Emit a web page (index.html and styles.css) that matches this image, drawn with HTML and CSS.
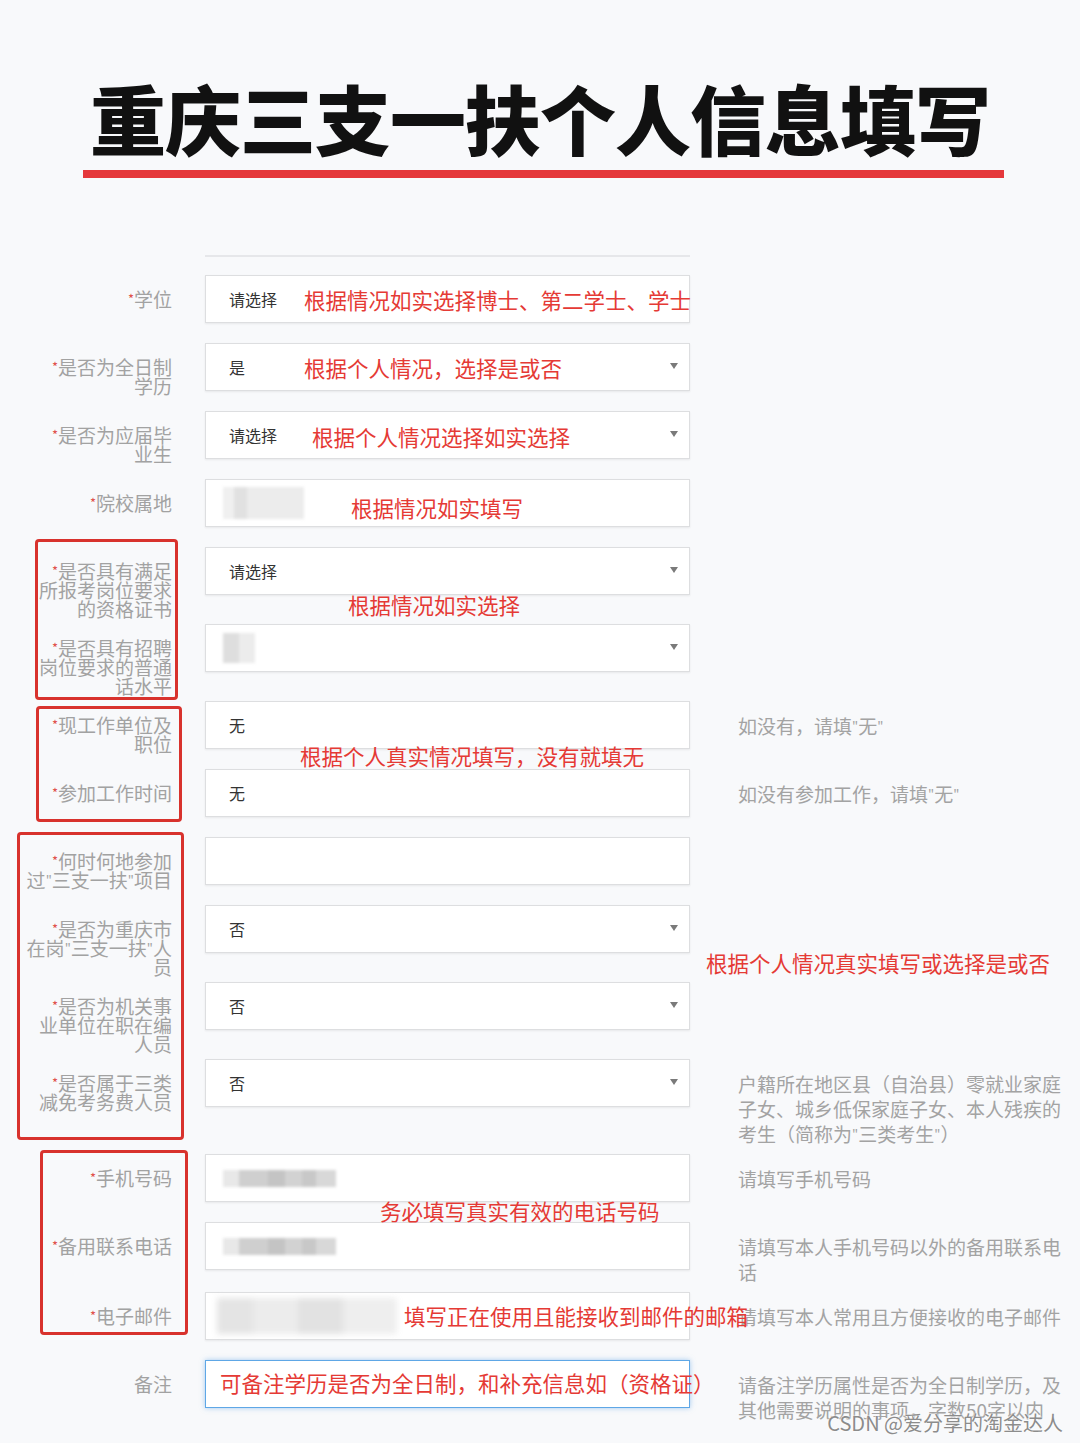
FILE: index.html
```html
<!DOCTYPE html>
<html>
<head lang="zh-CN">
    <meta charset="UTF-8">
    <title>重庆三支一扶个人信息填写</title>
    <link rel="stylesheet" href="styles.css">
</head>
<body>
<div class="page">
    <h1 class="title">重庆三支一扶个人信息填写</h1>
    <div class="title_bar"></div>

    <div class="form">
        <div class="form_top"></div>

        <div class="row">
            <div class="label"><span class="req">*</span>学位</div>
            <div class="field"><span class="val">请选择</span></div>
            <div class="hint"></div>
        </div>
        <div class="row">
            <div class="label"><span class="req">*</span>是否为全日制<br>学历</div>
            <div class="field select"><span class="val">是</span></div>
            <div class="hint"></div>
        </div>
        <div class="row">
            <div class="label"><span class="req">*</span>是否为应届毕<br>业生</div>
            <div class="field select"><span class="val">请选择</span></div>
            <div class="hint"></div>
        </div>
        <div class="row">
            <div class="label"><span class="req">*</span>院校属地</div>
            <div class="field"><span class="blur blur_school"></span></div>
            <div class="hint"></div>
        </div>
        <div class="row">
            <div class="label"><span class="req">*</span>是否具有满足<br>所报考岗位要求<br>的资格证书</div>
            <div class="field select"><span class="val">请选择</span></div>
            <div class="hint"></div>
        </div>
        <div class="row">
            <div class="label"><span class="req">*</span>是否具有招聘<br>岗位要求的普通<br>话水平</div>
            <div class="field select"><span class="blur blur_small"></span></div>
            <div class="hint"></div>
        </div>
        <div class="row">
            <div class="label"><span class="req">*</span>现工作单位及<br>职位</div>
            <div class="field"><span class="val">无</span></div>
            <div class="hint">如没有，请填<span class="q">"</span>无<span class="q">"</span></div>
        </div>
        <div class="row">
            <div class="label"><span class="req">*</span>参加工作时间</div>
            <div class="field"><span class="val">无</span></div>
            <div class="hint">如没有参加工作，请填<span class="q">"</span>无<span class="q">"</span></div>
        </div>
        <div class="row">
            <div class="label"><span class="req">*</span>何时何地参加<br>过<span class="q">"</span>三支一扶<span class="q">"</span>项目</div>
            <div class="field"></div>
            <div class="hint"></div>
        </div>
        <div class="row">
            <div class="label"><span class="req">*</span>是否为重庆市<br>在岗<span class="q">"</span>三支一扶<span class="q">"</span>人<br>员</div>
            <div class="field select"><span class="val">否</span></div>
            <div class="hint"></div>
        </div>
        <div class="row">
            <div class="label"><span class="req">*</span>是否为机关事<br>业单位在职在编<br>人员</div>
            <div class="field select"><span class="val">否</span></div>
            <div class="hint"></div>
        </div>
        <div class="row">
            <div class="label"><span class="req">*</span>是否属于三类<br>减免考务费人员</div>
            <div class="field select"><span class="val">否</span></div>
            <div class="hint">户籍所在地区县（自治县）零就业家庭<br>子女、城乡低保家庭子女、本人残疾的<br>考生（简称为<span class="q">"</span>三类考生<span class="q">"</span>）</div>
        </div>
        <div class="row">
            <div class="label"><span class="req">*</span>手机号码</div>
            <div class="field"><span class="blur blur_phone"></span></div>
            <div class="hint">请填写手机号码</div>
        </div>
        <div class="row">
            <div class="label"><span class="req">*</span>备用联系电话</div>
            <div class="field"><span class="blur blur_phone"></span></div>
            <div class="hint">请填写本人手机号码以外的备用联系电<br>话</div>
        </div>
        <div class="row">
            <div class="label"><span class="req">*</span>电子邮件</div>
            <div class="field"><span class="blur blur_mail"></span></div>
            <div class="hint">请填写本人常用且方便接收的电子邮件</div>
        </div>
        <div class="row">
            <div class="label">备注</div>
            <div class="field focus"></div>
            <div class="hint">请备注学历属性是否为全日制学历，及<br>其他需要说明的事项，字数50字以内</div>
        </div>
    </div>

    <!-- 红框标注 -->
    <div class="mark_box box_a"></div>
    <div class="mark_box box_b"></div>
    <div class="mark_box box_c"></div>
    <div class="mark_box box_d"></div>

    <!-- 红字说明 -->
    <div class="note" style="left:304px;top:289px;">根据情况如实选择博士、第二学士、学士</div>
    <div class="note" style="left:304px;top:357px;">根据个人情况，选择是或否</div>
    <div class="note" style="left:312px;top:426px;">根据个人情况选择如实选择</div>
    <div class="note" style="left:351px;top:497px;">根据情况如实填写</div>
    <div class="note" style="left:348px;top:594px;">根据情况如实选择</div>
    <div class="note" style="left:300px;top:745px;">根据个人真实情况填写，没有就填无</div>
    <div class="note" style="left:706px;top:952px;">根据个人情况真实填写或选择是或否</div>
    <div class="note" style="left:380px;top:1200px;">务必填写真实有效的电话号码</div>
    <div class="note" style="left:404px;top:1305px;">填写正在使用且能接收到邮件的邮箱</div>
    <div class="note" style="left:220px;top:1372px;">可备注学历是否为全日制，和补充信息如（资格证）</div>

    <div class="watermark">CSDN @爱分享的淘金达人</div>
</div>
</body>
</html>
```

FILE: styles.css
```css
* {
    margin: 0;
    padding: 0;
    box-sizing: border-box;
}
body {
    background-color: #f8f9fb;
    font-family: "Noto Sans CJK SC", "Liberation Sans", sans-serif;
}
.page {
    position: relative;
    width: 1080px;
    height: 1443px;
    overflow: hidden;
}

/* 标题 */
.title {
    padding-top: 79px;
    font-size: 76px;
    line-height: 76px;
    font-weight: 900;
    color: #111;
    text-align: center;
    letter-spacing: -1px;
}
.title_bar {
    width: 921px;
    height: 8px;
    margin: 15px 0 0 83px;
    background-color: #e5383b;
}

/* 表单 */
.form {
    padding-left: 20px;
}
.form_top {
    width: 485px;
    height: 2px;
    margin: 77px 0 18px 185px;
    background-color: #e6e7ea;
}
.row {
    display: grid;
    grid-template-columns: 152px 485px 1fr;
    column-gap: 33px;
    align-items: start;
}
.label {
    padding: 14px 0 6px;
    font-size: 19px;
    line-height: 19px;
    color: #a2a2a2;
    text-align: right;
    white-space: nowrap;
}
.req {
    color: #e0504a;
    font-size: 13px;
    vertical-align: top;
}
.q {
    font-size: 13px;
    vertical-align: top;
}
.field {
    position: relative;
    display: flex;
    align-items: center;
    height: 48px;
    margin-bottom: 20px;
    padding-left: 17px;
    background-color: #fff;
    border: 1px solid #dddee0;
    box-shadow: 0 1px 2px rgba(0, 0, 0, 0.07);
}
.select::after {
    content: "";
    position: absolute;
    right: 11px;
    top: 19px;
    border-left: 4px solid transparent;
    border-right: 4px solid transparent;
    border-top: 6px solid #7a7a7a;
}
.focus {
    border-color: #5ea7e6;
    box-shadow: 0 0 5px rgba(90, 160, 230, 0.55);
}
.val {
    padding-left: 6px;
    font-size: 16px;
    color: #333;
}
.hint {
    padding: 12px 0 8px 15px;
    font-size: 19px;
    line-height: 25px;
    color: #a3a3a3;
    white-space: nowrap;
}

/* 打码 */
.blur {
    display: block;
    filter: blur(1.5px);
}
.blur_school {
    width: 81px;
    height: 32px;
    background: linear-gradient(90deg, #f0f0f0 0 14%, #e1e1e1 14% 30%, #ececec 30% 100%);
}
.blur_small {
    width: 32px;
    height: 30px;
    background: linear-gradient(90deg, #dedede 0 50%, #ececec 50% 100%);
}
.blur_phone {
    width: 113px;
    height: 17px;
    background: linear-gradient(90deg, #e8e8e8 0 14%, #cfcfcf 14% 40%, #c4c4c4 40% 55%, #d2d2d2 55% 70%, #c8c8c8 70% 82%, #d8d8d8 82% 100%);
}
.blur_mail {
    width: 180px;
    height: 36px;
    margin-left: -6px;
    filter: blur(3px);
    background: linear-gradient(90deg, #e4e4e4 0 20%, #ececec 20% 45%, #e2e2e2 45% 70%, #eeeeee 70% 100%);
}

/* 标注 */
.mark_box {
    position: absolute;
    border: 3px solid #d8322d;
    border-radius: 4px;
}
.box_a {
    left: 35px;
    top: 539px;
    width: 143px;
    height: 161px;
}
.box_b {
    left: 36px;
    top: 706px;
    width: 146px;
    height: 116px;
}
.box_c {
    left: 17px;
    top: 832px;
    width: 167px;
    height: 308px;
}
.box_d {
    left: 40px;
    top: 1150px;
    width: 148px;
    height: 185px;
}
.note {
    position: absolute;
    font-size: 21.5px;
    line-height: 21.5px;
    color: #e53a35;
    white-space: nowrap;
}
.watermark {
    position: absolute;
    right: 17px;
    top: 1411px;
    font-size: 20px;
    line-height: 24px;
    color: #8c8c8c;
    text-shadow: 0 0 2px #fff, 0 0 2px #fff;
}
```
